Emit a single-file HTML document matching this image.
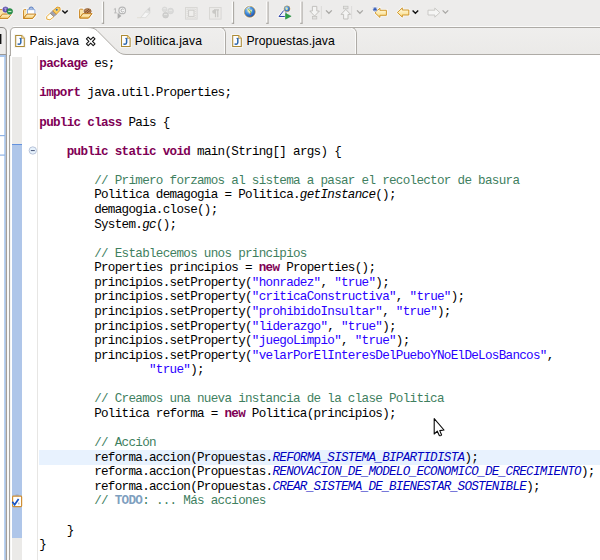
<!DOCTYPE html>
<html><head><meta charset="utf-8"><title>Eclipse</title>
<style>
html,body{margin:0;padding:0}
body{width:600px;height:560px;overflow:hidden;position:relative;background:#edeceb;font-family:"Liberation Sans",sans-serif;}
.abs{position:absolute}
#tabbar{position:absolute;left:0;top:27px;width:600px;height:28px;}
#editor{position:absolute;left:10px;top:55px;width:590px;height:505px;background:#fff}
#ruler{position:absolute;left:12px;top:57px;width:10px;height:503px;background:#ebeae8}
#rulerblue{position:absolute;left:12px;top:144px;width:10px;height:394px;background:#afc6e9;border-top:1px solid #6391dd;box-sizing:border-box}
#sep{position:absolute;left:37px;top:55px;width:1px;height:505px;background:#e7e6e4}
#hl{position:absolute;left:39px;top:450px;width:561px;height:15px;background:#e8f2fe}
.ln{position:absolute;left:39.3px;white-space:pre;font-family:"Liberation Mono",monospace;font-size:12.6px;line-height:15px;height:15px;letter-spacing:-0.701px;color:#000}
.ln b.k{color:#7f0055;font-weight:bold}
.ln .c{color:#3f7f5f}
.ln .s{color:#2a00ff}
.ln i.f{color:#0000c0}
.ln b.t{color:#7f9fbf}
.tab{position:absolute;z-index:3;top:33px;font-size:12.2px;line-height:16px;color:#000;white-space:pre}
</style></head><body>
<!-- toolbar + tab bar -->
<svg class="abs" style="left:0;top:0;z-index:2" width="600" height="56" viewBox="0 0 600 56">
 <defs>
  <linearGradient id="tabg" x1="0" y1="0" x2="0" y2="1"><stop offset="0" stop-color="#efeeed"/><stop offset="1" stop-color="#ebeae8"/></linearGradient>
 </defs>
 <!-- tab bar bg -->
 <rect x="11" y="28" width="589" height="26" fill="url(#tabg)"/>
 <!-- top highlight + border -->
 <rect x="13" y="26" width="587" height="1" fill="#fbfbfa"/>
 <!-- active tab white fill -->
 <path d="M10.5 56 V32 Q10.5 27.5 15 27.5 H87 C92 27.5 94.5 28.3 97 30.5 L116 49.7 C119 52.7 121.5 54.5 126 54.5 H600 V56 Z" fill="#fff"/>
 <!-- borders -->
 <path d="M10.5 56 V32 Q10.5 27.5 15 27.5 H600" fill="none" stroke="#aeaba6" stroke-width="1"/>
 <path d="M87 27.5 C92 27.5 94.5 28.3 97 30.5 L116 49.7 C119 52.7 121.5 54.5 126 54.5 H600" fill="none" stroke="#aeaba6" stroke-width="1"/>
 <!-- tab separators -->
 <path d="M221 27.5 Q225.5 28.5 225.5 34 V54" fill="none" stroke="#aeaba6"/>
 <path d="M220 28.5 Q224.5 29.5 224.5 34 V54" fill="none" stroke="#fbfbfa"/>
 <path d="M352 27.5 Q356.5 28.5 356.5 34 V54" fill="none" stroke="#aeaba6"/>
 <path d="M351 28.5 Q355.5 29.5 355.5 34 V54" fill="none" stroke="#fbfbfa"/>
 <!-- left panel sliver -->
 <path d="M0 28 H2 Q6 28 6 32 V54 H0 Z" fill="#edeceb"/>
 <path d="M0 27.5 H2 Q6.3 27.5 6.3 32 V56" fill="none" stroke="#8f8c88"/>
 <path d="M7 56 V31 Q7 29.5 8 28.6 Q8.8 29.8 9 32 V56 Z" fill="#f9f9f8"/>
 <rect x="0" y="54" width="6" height="1" fill="#9c9995"/>
 <rect x="0" y="34" width="1.4" height="10" fill="#111"/>
 <defs>
  <g id="jfile">
   <path d="M0 0 H6.8 L9.6 2.9 V12 H0 Z" fill="#fcfcfb" stroke="#f6f5f3" stroke-width="2.2"/>
   <path d="M0.5 0.5 H6.5 L9.1 3.2 V11.5 H0.5 Z" fill="#fdfdfe" stroke="#ab8a36" stroke-width="1.05"/>
   <path d="M6.4 0.6 V3.3 H9" fill="#f3d9a0" stroke="#c9a046" stroke-width="0.8"/>
   <path d="M5.6 3.3 V7.6 Q5.6 9.3 4 9.3 Q3 9.3 2.5 8.6" fill="none" stroke="#2b66ad" stroke-width="1.5"/>
   <path d="M4.3 3.4 H6.2" stroke="#2b66ad" stroke-width="1" />
  </g>
 </defs>
 <use href="#jfile" x="15.2" y="35"/>
 <use href="#jfile" x="121" y="35"/>
 <use href="#jfile" x="232.2" y="35"/>
 <!-- close X -->
 <path transform="translate(86,36.7)" d="M0.4 2.2 L2.2 0.4 L4.7 2.9 L7.2 0.4 L9 2.2 L6.5 4.7 L9 7.2 L7.2 9 L4.7 6.5 L2.2 9 L0.4 7.2 L2.9 4.7 Z" fill="#fff" stroke="#141414" stroke-width="1.1" stroke-linejoin="round"/>

 <!-- ===== toolbar icons ===== -->
 <defs>
  <linearGradient id="fy" x1="0" y1="0" x2="0" y2="1"><stop offset="0" stop-color="#fff4d2"/><stop offset="1" stop-color="#f7cf74"/></linearGradient>
  <linearGradient id="ay" x1="0" y1="0" x2="0" y2="1"><stop offset="0" stop-color="#fffdec"/><stop offset="1" stop-color="#fad97c"/></linearGradient>
  <radialGradient id="gl" cx="0.4" cy="0.35" r="0.7"><stop offset="0" stop-color="#a6d6fa"/><stop offset="0.55" stop-color="#3a86d8"/><stop offset="1" stop-color="#1c449c"/></radialGradient>
  <g id="folder">
   <path d="M0 10.3 V1.2 Q0 -0.6 1.6 -0.6 H4 L5.2 0.8 H11.4 V5 H14 L10 10.3 Z" fill="#f7f6f4" stroke="#f7f6f4" stroke-width="1.6" stroke-linejoin="round"/>
   <path d="M0.5 9.3 V1.6 Q0.5 0.6 1.5 0.6 H3.6 L4.7 1.8 H10.6 V5" fill="#fbe3a6" stroke="#cb8a28" stroke-width="0.95"/>
   <path d="M0.6 9.4 L3.9 5.1 H12.9 L9.5 9.4 Z" fill="url(#fy)" stroke="#c6821f" stroke-width="1" stroke-linejoin="round"/>
  </g>
  <g id="sepv"><rect x="0" y="1.5" width="1.6" height="21.6" fill="#fcfcfb"/><rect x="1.5" y="1.6" width="0.9" height="22" fill="#9d9a95"/><rect x="0" y="22.8" width="2.4" height="0.9" fill="#9d9a95"/></g>
  <g id="larrow">
   <path d="M0 5 L6 -0.6 V2 H12.8 V8 H6 V10.6 Z" fill="#f6f5f3" stroke="#f6f5f3" stroke-width="1.6" stroke-linejoin="round"/>
   <path d="M0.6 5 L5.5 0.4 V2.5 H12 V7.5 H5.5 V9.6 Z" fill="url(#ay)" stroke="#d09424" stroke-width="0.95" stroke-linejoin="round"/>
  </g>
 </defs>
 <!-- icon1: folder w/ balls (cut on left) -->
 <use href="#folder" x="-1.5" y="9"/>
 <circle cx="5.5" cy="9.6" r="3.3" fill="#f6f5f3"/><circle cx="9.8" cy="11.4" r="3.4" fill="#f6f5f3"/>
 <circle cx="5.5" cy="9.6" r="2.7" fill="#6a58b8" stroke="#4a3a98" stroke-width="0.6"/>
 <path d="M4.3 8.3 H6.6 M5.4 8.3 V11" stroke="#b8aee6" stroke-width="0.8" fill="none"/>
 <circle cx="9.8" cy="11.4" r="2.8" fill="#2f9650" stroke="#1c7a3a" stroke-width="0.6"/>
 <rect x="8.2" y="10.9" width="3.2" height="1.1" fill="#bfe6c6"/>
 <!-- icon2: folder w/ blue/white box -->
 <use href="#folder" x="23" y="9"/>
 <path d="M27 14 V9.4 H35.4 V14 Z" fill="#fbfcfe" stroke="#f6f5f3" stroke-width="1.6"/>
 <path d="M29 9.2 Q29 7 31.2 7 Q33.4 7 33.4 9.2" fill="#a9bfe6" stroke="#5d7fc0" stroke-width="1"/>
 <path d="M27.5 13.8 V9.6 H34.9 V13.8" fill="#fdfdff" stroke="#8aa6d8" stroke-width="0.9"/>
 <path d="M23.6 18.4 L26.9 14.1 H35.9 L32.5 18.4 Z" fill="url(#fy)" stroke="#c6821f" stroke-width="1" stroke-linejoin="round"/>
 <!-- icon3: flashlight/pen -->
 <path d="M45.8 16.6 L56.8 6.4 L60.4 7.2 L60.8 10.2 L50.4 20.4 L46.2 19.8 Z" fill="#f6f5f3" stroke="#f6f5f3" stroke-width="1.4" stroke-linejoin="round"/>
 <path d="M46.6 16.8 L50.2 13.2 L54 16.6 L50 19.8 L46.8 19.2 Z" fill="#fffdf2" stroke="#e6a630" stroke-width="0.9" stroke-linejoin="round"/>
 <path d="M50.2 13.2 L52.8 10.8 L56.4 14.2 L54 16.6 Z" fill="#a2a2ac" stroke="#84848e" stroke-width="0.7"/>
 <path d="M52.8 10.8 L57 7 L59.9 7.6 L60.2 10.2 L56.4 14.2 Z" fill="#f9d063" stroke="#d8932a" stroke-width="0.9" stroke-linejoin="round"/>
 <circle cx="56.7" cy="9.7" r="1" fill="#2a6cc4"/>
 <path d="M62.3 10.4 L65 13.1 L67.7 10.4" fill="none" stroke="#111" stroke-width="1.4"/>
 <!-- icon4: folder w/ brown oval -->
 <use href="#folder" x="79" y="8.6"/>
 <ellipse cx="87.6" cy="11.2" rx="4.3" ry="3.2" fill="#f6f5f3"/>
 <ellipse cx="87.6" cy="11.2" rx="3.6" ry="2.6" fill="#c08a5a" stroke="#8a5a30" stroke-width="0.7"/>
 <path d="M85 12.4 L89 9.2 M86.6 13.2 L90.4 10.2" stroke="#6a3c20" stroke-width="0.8"/>
 <path d="M79.6 18 L82.9 13.7 H91.9 L88.5 18 Z" fill="url(#fy)" stroke="#c6821f" stroke-width="1" stroke-linejoin="round"/>
 <use href="#sepv" x="101.7" y="0"/>
 <!-- icon5 disabled: debug-ish -->
 <path d="M113.8 9.6 L115.4 8.4 V12.8 M114.2 12.9 H116.8" fill="none" stroke="#b9b9b9" stroke-width="1"/>
 <circle cx="122.2" cy="10.4" r="3.3" fill="#f7f7f7" stroke="#b7b7b7" stroke-width="1.2"/>
 <path d="M123.6 9.4 Q122.2 8.4 121.2 9.6 Q120.6 11 121.6 11.8 Q122.8 12.4 123.7 11.4" fill="none" stroke="#a6a6a6" stroke-width="0.9"/>
 <path d="M117.6 12.8 L121.4 15.9 L117.6 19 Z" fill="#ababab"/>
 <!-- icon6 disabled: marker -->
 <path d="M137 17.7 H141" stroke="#dddad0" stroke-width="0.8"/>
 <path d="M140.8 17.4 L146.6 10 L149.8 7.2 L150 13 L145.8 17.6 Z" fill="#e3e3e2" stroke="#d6d6d5" stroke-width="0.6"/>
 <path d="M141.8 17 L145.4 12.8 L148.8 13.6 L145.4 17.2 Z" fill="#f6f6f6"/>
 <path d="M147.4 9.4 L149.8 7.4 L149.9 11.6" fill="#cdcdcd"/>
 <!-- icon7 disabled: three balls -->
 <circle cx="164.6" cy="9.4" r="2.4" fill="#dcdcdb" stroke="#d0d0cf" stroke-width="0.5"/>
 <circle cx="170.6" cy="11" r="2.9" fill="#dbdbda" stroke="#cfcfce" stroke-width="0.5"/>
 <circle cx="165.6" cy="15.2" r="2.9" fill="#cfcfce" stroke="#c4c4c3" stroke-width="0.5"/>
 <path d="M163.4 8.6 H165.8 M169 10.4 H172 M164 14.6 H167.2" stroke="#ebebea" stroke-width="0.8"/>
 <!-- icon8 disabled: block selection -->
 <rect x="185.5" y="7.5" width="11.6" height="11.6" fill="#ebeae8" stroke="#d9d8d5" stroke-width="1"/>
 <rect x="188.6" y="10.2" width="5.4" height="6.2" fill="#efeeec" stroke="#cccbc8" stroke-width="0.9"/>
 <path d="M187.6 8.9 H195 M187.6 17.8 H195 M187.2 9 V18 M195.4 9 V18" stroke="#d6d5d2" stroke-width="0.7" stroke-dasharray="1 1"/>
 <!-- icon9 disabled: pilcrow -->
 <rect x="209.5" y="7.5" width="11.6" height="11.6" fill="#ebeae8" stroke="#d9d8d5" stroke-width="1"/>
 <path d="M215.5 9.8 V17.2 M217.8 9.8 V17.2 M214 9.8 H219" stroke="#c9c8c5" stroke-width="1.2" fill="none"/>
 <path d="M215.5 9.8 H214.4 Q212.2 9.8 212.2 11.8 Q212.2 13.8 214.4 13.8 H215.5 Z" fill="#c9c8c5"/>
 <use href="#sepv" x="231.7" y="0"/>
 <!-- icon10: globe -->
 <circle cx="249.8" cy="11.8" r="6.7" fill="#f6f5f3"/>
 <circle cx="249.8" cy="11.8" r="5.5" fill="url(#gl)" stroke="#c9a050" stroke-width="0.7"/>
 <path d="M247.2 9 Q248.6 8 249.8 8.8 L250.6 10.4 L252.4 9 L251.6 11.6 L250.6 12.6 L250.4 15 L249.2 13 L247.8 11.8 Z" fill="#e9e6b0"/>
 <path d="M248.4 9.4 L250 10.6 L251 12 L250.4 13.6" stroke="#6cb84a" stroke-width="0.9" fill="none"/>
 <circle cx="250.4" cy="14" r="0.7" fill="#d0482a"/>
 <path d="M246.2 9.4 Q247.6 7 250.2 6.9" stroke="#d8ecff" stroke-width="0.9" fill="none"/>
 <use href="#sepv" x="266.1" y="0"/>
 <!-- icon11: triangle + globe + play -->
 <path d="M278.4 16.8 L284.4 9 L288.6 16.8 Z" fill="#f2f4fb" stroke="#f6f5f3" stroke-width="2.4" stroke-linejoin="round"/>
 <path d="M279 16.5 L284.4 9.6 L288 16.5 Z" fill="#eef1fa" stroke="#3348ac" stroke-width="1" stroke-linejoin="round"/>
 <circle cx="287" cy="8.8" r="3.8" fill="#f6f5f3"/>
 <circle cx="287" cy="8.8" r="3" fill="url(#gl)" stroke="#c9a050" stroke-width="0.6"/>
 <path d="M285.6 7.6 L287.8 8 L287.2 10.4 L285.8 9.4 Z" fill="#e9e6a0"/>
 <path d="M284.8 12.4 L292 16.2 L284.8 20 Z" fill="#f6f5f3"/>
 <path d="M285.5 13.3 L291.2 16.2 L285.5 19.2 Z" fill="#2ea048" stroke="#1c8236" stroke-width="0.5"/>
 <use href="#sepv" x="300.1" y="0"/>
 <!-- icon12 disabled: next annotation -->
 <path d="M312.4 6.4 H316.8 V11 H319.4 L314.6 16 L309.8 11 H312.4 Z" fill="#f4f4f3" stroke="#bdbcb9" stroke-width="0.9" stroke-linejoin="round"/>
 <rect x="312.4" y="16.4" width="4.4" height="2.6" fill="#e2e2e0" stroke="#c2c1be" stroke-width="0.7"/>
 <path d="M321.4 6 V19" stroke="#d8d7d4" stroke-width="0.8"/>
 <path d="M326 10.4 L328.9 13.3 L331.8 10.4" fill="none" stroke="#a9a8a5" stroke-width="1.3"/>
 <!-- icon13 disabled: prev annotation -->
 <rect x="343.6" y="6.2" width="4.4" height="2.6" fill="#e2e2e0" stroke="#c2c1be" stroke-width="0.7"/>
 <path d="M343.6 19 H348 V14.4 H350.6 L345.8 9.4 L341 14.4 H343.6 Z" fill="#f4f4f3" stroke="#bdbcb9" stroke-width="0.9" stroke-linejoin="round"/>
 <path d="M351.6 6 V19" stroke="#d8d7d4" stroke-width="0.8"/>
 <path d="M357 10.4 L359.9 13.3 L362.8 10.4" fill="none" stroke="#a9a8a5" stroke-width="1.3"/>
 <!-- icon14: last edit location -->
 <use href="#larrow" x="374.4" y="7.8"/>
 <path d="M375 6.6 V12 M372.4 9.3 H377.6 M373.2 7.4 L376.8 11.2 M376.8 7.4 L373.2 11.2" stroke="#f6f5f3" stroke-width="2"/>
 <path d="M375 7 V11.6 M372.8 9.3 H377.2 M373.4 7.7 L376.6 10.9 M376.6 7.7 L373.4 10.9" stroke="#2c56b4" stroke-width="0.9"/>
 <!-- icon15: back -->
 <use href="#larrow" x="396.8" y="7.5"/>
 <path d="M412.6 10.4 L415.4 13.2 L418.2 10.4" fill="none" stroke="#111" stroke-width="1.4"/>
 <!-- icon16 disabled: forward -->
 <path d="M439.8 12.6 L434.8 8 V10.2 H428 V15 H434.8 V17.2 Z" fill="#f5f5f4" stroke="#c6c5c2" stroke-width="0.9" stroke-linejoin="round"/>
 <path d="M442.6 10.4 L445.4 13.2 L448.2 10.4" fill="none" stroke="#a9a8a5" stroke-width="1.3"/>
</svg>
<div id="editor"></div>
<div id="ruler"></div><div id="rulerblue"></div><div id="sep"></div><div id="hl"></div>
<svg class="abs" style="left:0;top:55px;z-index:2" width="40" height="505" viewBox="0 55 40 505">
 <rect x="0" y="55" width="5.8" height="505" fill="#fff"/>
 <rect x="0" y="55" width="5.8" height="2" fill="#a9c8f1"/>
 <rect x="4.2" y="55" width="1.6" height="505" fill="#a9c8f1"/>
 <rect x="0" y="135" width="5" height="1.2" fill="#8fb3e6"/>
 <rect x="0" y="154.5" width="5" height="1.2" fill="#8fb3e6"/>
 <rect x="5.8" y="55" width="1.1" height="505" fill="#8f8c88"/>
 <rect x="6.9" y="55" width="2.1" height="505" fill="#f9f9f8"/>
 <rect x="9" y="55" width="1.1" height="505" fill="#a5a3a0"/>
 <!-- fold toggle -->
 <circle cx="32.8" cy="150.5" r="3.7" fill="#e7f2fc" stroke="#b3bed6" stroke-width="0.9"/>
 <rect x="30.8" y="150" width="4" height="1.1" fill="#566384"/>
 <!-- task marker -->
 <rect x="15.4" y="494.2" width="3.4" height="2.4" rx="0.8" fill="#9fb0cf"/>
 <rect x="12.6" y="496.2" width="9" height="10.4" rx="0.8" fill="#fff" stroke="#cf8f35" stroke-width="1.2"/>
 <rect x="18.2" y="502.6" width="1.2" height="1.8" fill="#a8aec0"/>
 <path d="M12.4 501.8 L14.6 504.8 L18.6 499" fill="none" stroke="#1550c2" stroke-width="1.7"/>
 <path d="M12.6 503.2 L14.4 505.6" fill="none" stroke="#3f8eea" stroke-width="0.9"/>
</svg>

<div class="tab" style="left:29.6px">Pais.java</div>
<div class="tab" style="left:134.8px;letter-spacing:0.19px">Politica.java</div>
<div class="tab" style="left:246.4px;letter-spacing:0.07px">Propuestas.java</div>
<svg class="abs" style="left:428px;top:414px;z-index:5" width="22" height="26" viewBox="428 414 22 26">
 <path d="M434.2 418.6 V434 L437.3 431.2 L439.3 435.6 Q440.6 436.2 441.6 435 L439.8 430.6 L444 430 Z" fill="#fff" stroke="#fff" stroke-width="2.6" stroke-linejoin="round" opacity="0.85"/>
 <path d="M434.2 418.6 V434 L437.3 431.2 L439.3 435.6 Q440.6 436.2 441.6 435 L439.8 430.6 L444 430 Z" fill="#fff" stroke="#0a0a0a" stroke-width="1.1" stroke-linejoin="round"/>
</svg>
<div class="ln" style="top:57.30px"><b class="k">package</b> es;</div>
<div class="ln" style="top:86.44px"><b class="k">import</b> java.util.Properties;</div>
<div class="ln" style="top:115.58px"><b class="k">public</b> <b class="k">class</b> Pais {</div>
<div class="ln" style="top:144.72px">    <b class="k">public</b> <b class="k">static</b> <b class="k">void</b> main(String[] args) {</div>
<div class="ln" style="top:173.86px">        <span class="c">// Primero forzamos al sistema a pasar el recolector de basura</span></div>
<div class="ln" style="top:188.43px">        Politica demagogia = Politica.<i>getInstance</i>();</div>
<div class="ln" style="top:203.00px">        demagogia.close();</div>
<div class="ln" style="top:217.57px">        System.<i>gc</i>();</div>
<div class="ln" style="top:246.71px">        <span class="c">// Establecemos unos principios</span></div>
<div class="ln" style="top:261.28px">        Properties principios = <b class="k">new</b> Properties();</div>
<div class="ln" style="top:275.85px">        principios.setProperty(<span class="s">&quot;honradez&quot;</span>, <span class="s">&quot;true&quot;</span>);</div>
<div class="ln" style="top:290.42px">        principios.setProperty(<span class="s">&quot;criticaConstructiva&quot;</span>, <span class="s">&quot;true&quot;</span>);</div>
<div class="ln" style="top:304.99px">        principios.setProperty(<span class="s">&quot;prohibidoInsultar&quot;</span>, <span class="s">&quot;true&quot;</span>);</div>
<div class="ln" style="top:319.56px">        principios.setProperty(<span class="s">&quot;liderazgo&quot;</span>, <span class="s">&quot;true&quot;</span>);</div>
<div class="ln" style="top:334.13px">        principios.setProperty(<span class="s">&quot;juegoLimpio&quot;</span>, <span class="s">&quot;true&quot;</span>);</div>
<div class="ln" style="top:348.70px">        principios.setProperty(<span class="s">&quot;velarPorElInteresDelPueboYNoElDeLosBancos&quot;</span>,</div>
<div class="ln" style="top:363.27px">                <span class="s">&quot;true&quot;</span>);</div>
<div class="ln" style="top:392.41px">        <span class="c">// Creamos una nueva instancia de la clase Politica</span></div>
<div class="ln" style="top:406.98px">        Politica reforma = <b class="k">new</b> Politica(principios);</div>
<div class="ln" style="top:436.12px">        <span class="c">// Acción</span></div>
<div class="ln" style="top:450.69px">        reforma.accion(Propuestas.<i class="f">REFORMA_SISTEMA_BIPARTIDISTA</i>);</div>
<div class="ln" style="top:465.26px">        reforma.accion(Propuestas.<i class="f">RENOVACION_DE_MODELO_ECONOMICO_DE_CRECIMIENTO</i>);</div>
<div class="ln" style="top:479.83px">        reforma.accion(Propuestas.<i class="f">CREAR_SISTEMA_DE_BIENESTAR_SOSTENIBLE</i>);</div>
<div class="ln" style="top:494.40px">        <span class="c">// <b class="t">TODO</b>: ... Más acciones</span></div>
<div class="ln" style="top:523.54px">    }</div>
<div class="ln" style="top:538.11px">}</div>

</body></html>
